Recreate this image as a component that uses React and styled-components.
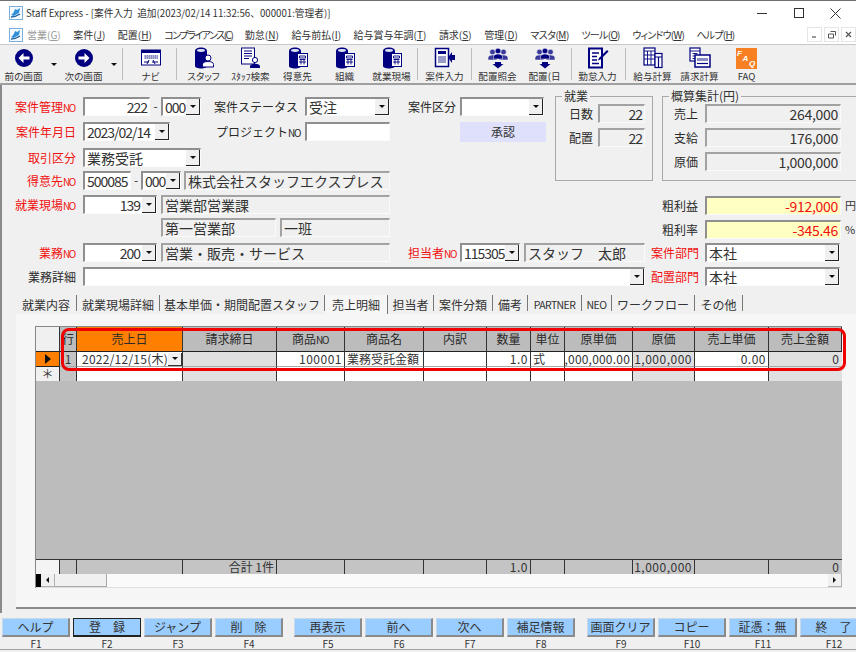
import React from "react";
import styled, { createGlobalStyle } from "styled-components";

const Global = createGlobalStyle`
  html, body { margin: 0; padding: 0; background: #f0f0f0; }
  body { font-family: "Noto Sans CJK JP", "Liberation Sans", sans-serif; color: #222; }
`;
const Root = styled.div`
  width: 856px; height: 652px; overflow: hidden; position: relative;
  display: flex; flex-direction: column; background: #f0f0f0;
  border-top: 1px solid #707070; box-sizing: border-box;
`;
const TitleBar = styled.div`
  height: 24px; flex: none; background: #fff; display: flex; align-items: center;
  padding: 0 2px 0 9px; font-size: 9.7px; color: #333; white-space: nowrap;
`;
const TitleText = styled.span` margin-left: 3px; flex: 1; `;
const WinBtn = styled.div`
  width: 37px; height: 24px; display: flex; align-items: center; justify-content: center; flex: none;
`;
const MenuBar = styled.div`
  height: 19px; flex: none; background: #fff; display: flex; align-items: center;
  padding-left: 9px; font-size: 10px; color: #333; white-space: nowrap; position: relative;
`;
const MenuList = styled.div` display: flex; gap: 12.5px; margin-left: 4px; flex: 1; `;
const MenuItem = styled.span`
  color: ${p => (p.$off ? "#999" : "#333")}; font-feature-settings: "palt";
  letter-spacing: ${p => p.$ls || 0}px;
  u { text-underline-offset: 1px; }
`;
const MdiBtns = styled.div` display: flex; gap: 2px; flex: none; `;
const MdiBtn = styled.div`
  width: 15px; height: 15px; border: 1px solid #e6e6e6; box-sizing: border-box; background: #fff;
  display: flex; align-items: center; justify-content: center;
`;
const Toolbar = styled.div`
  height: 41px; flex: none; display: flex; align-items: stretch; background: #f0f0f0;
  border-bottom: 2px solid #a0a0a0; box-sizing: border-box; border-top: 1px solid #c8c8c8;
`;
const Tool = styled.div`
  width: 47px; flex: none; display: flex; flex-direction: column; align-items: center;
  padding-top: 2px; box-sizing: border-box;
`;
const ToolIcon = styled.div` height: 22px; display: flex; align-items: center; justify-content: center; `;
const ToolLabel = styled.div` font-size: 9.6px; line-height: 14px; color: #333; white-space: nowrap; font-feature-settings: "palt"; `;
const ToolDrop = styled.div`
  width: 13px; flex: none; padding-top: 18px; box-sizing: border-box; display: flex; justify-content: center;
  &::after { content: ""; border-left: 3px solid transparent; border-right: 3px solid transparent; border-top: 3px solid #111; height: 0; }
`;
const ToolSep = styled.div`
  width: 1px; flex: none; background: #bdbdbd; margin: 3px ${p => p.$r ?? 3}px 3px ${p => p.$l ?? 3}px;
`;
const Main = styled.div` flex: 1; display: flex; flex-direction: column; min-height: 0; `;
const Form = styled.div`
  padding: 12px 0 4px; position: relative;
  &::before { content: ""; position: absolute; left: 0; top: 0; bottom: 0; width: 2px; background: #8a8a8a; }
`;
const Top = styled.div` display: flex; `;
const LeftCol = styled.div` width: 555px; flex: none; `;
const RightCol = styled.div` flex: 1; margin-top: -1px; `;
const FormRow = styled.div` display: flex; align-items: flex-start; height: ${p => p.$h}px; `;
const Label = styled.div`
  width: ${p => p.$w || 76}px; margin-left: ${p => p.$ml || 0}px; flex: none; text-align: right; font-size: 12px;
  line-height: 19px; white-space: nowrap; color: ${p => (p.$red ? "#f01010" : "#2a2a2a")};
`;
const No = styled.span` font-size: 10px; letter-spacing: -1.3px; margin-right: 1px; `;
const Dash = styled.div` width: ${p => p.$w}px; flex: none; text-align: center; font-size: 12px; line-height: 18px; color: #333; `;
const Field = styled.div`
  width: ${p => p.$w}px; height: 19px; margin-left: ${p => p.$ml || 0}px; flex: none; box-sizing: border-box;
  display: flex; align-items: stretch;
  background: ${p => p.$bg || (p.$ro ? "#f0f0f0" : "#fff")};
  border-top: 2px solid ${p => (p.$ro ? "#a2a2a2" : "#8f8f8f")};
  border-left: 2px solid ${p => (p.$ro ? "#a2a2a2" : "#8f8f8f")};
  border-right: 1px solid #fbfbfb; border-bottom: 1px solid #fbfbfb;
`;
const Value = styled.div`
  flex: 1; min-width: 0; white-space: nowrap; padding: 0 2px; line-height: 16px;
  font-size: 14px; color: ${p => p.$color || "#333"};
  text-align: ${p => (p.$num ? "right" : "left")};
  letter-spacing: ${p => (p.$ls !== undefined ? p.$ls : p.$digits ? -1 : 0)}px;
`;
const ArrowBtn = styled.div`
  width: 14px; flex: none; background: #f0f0f0; box-sizing: border-box;
  border-right: 1px solid #222; border-bottom: 1px solid #222;
  display: flex; align-items: center; justify-content: center;
  &::after { content: ""; border-left: 3px solid transparent; border-right: 3px solid transparent; border-top: 3px solid #111; height: 0; }
`;
const Approve = styled.div`
  width: 86px; height: 20px; margin-left: ${p => p.$ml}px; flex: none; background: #dfe0fb; text-align: center;
  font-size: 12px; line-height: 19px; color: #333;
`;
const Groups = styled.div` display: flex; gap: 9px; `;
const GroupBox = styled.div`
  width: ${p => p.$w}px; height: 85px; flex: none; box-sizing: border-box; position: relative;
  border: 1px solid #a8a8a8; padding-top: 7px; display: flex; flex-direction: column; gap: 5px;
`;
const Legend = styled.div`
  position: absolute; top: -8px; left: 6px; background: #f0f0f0; padding: 0 2px; font-size: 12px; line-height: 14px; color: #333;
`;
const StatRow = styled.div` display: flex; align-items: flex-start; height: 19px; `;
const Profit = styled.div` display: flex; flex-direction: column; gap: 5px; margin-top: 15px; `;
const Unit = styled.div` font-size: 11px; line-height: 19px; margin-left: 4px; color: #333; white-space: nowrap; `;

const Tabs = styled.div` display: flex; height: 19px; margin: 4px 0 0 16px; align-items: stretch; `;
const TabItem = styled.div`
  width: ${p => p.$w}px; flex: none; box-sizing: border-box; text-align: center; font-size: ${p => (p.$latin ? 10.5 : 12)}px; line-height: 20px; white-space: nowrap;
  color: #333; background: ${p => (p.$active ? "#f6f6f6" : "transparent")};
  border-right: 1px solid #777; margin-bottom: ${p => (p.$active ? 0 : 3)}px;
  letter-spacing: ${p => (p.$latin ? -0.6 : 0)}px;
`;
const Panel = styled.div`
  height: 295px; flex: none; margin-left: 16px; background: #f6f6f6; box-sizing: border-box;
  border-bottom: 2px solid #8a8a8a; padding: 12px 14px 20px 19px;
`;
const GridWrap = styled.div`
  width: 807px; height: 262px; box-sizing: border-box; border-top: 1px solid #888; border-left: 1px solid #888;
  display: flex; flex-direction: column; position: relative; background: #bcbcbc;
`;
const Cols = styled.div`
  display: grid; flex: none; height: ${p => p.$h}px;
  grid-template-columns: 24px 17px 106px 94px 68px 79px 63px 44px 34px 68px 62px 74px 73px;
`;
const Head = styled.div`
  background: ${p => p.$bg || "#bcbcbc"}; border-right: 1px solid #333; border-bottom: 1px solid #222; box-sizing: border-box;
  font-size: 12px; line-height: 23px; text-align: center; color: #2a2a2a; white-space: nowrap;
`;
const Cell = styled.div`
  background: ${p => p.$bg || "#fff"}; border-right: 1px solid ${p => p.$line || "#333"}; border-bottom: 1px solid ${p => p.$under || "#a8a8a8"};
  box-sizing: border-box; font-size: 12px; line-height: 14px; color: #333; white-space: nowrap; min-width: 0;
  display: flex; justify-content: ${p => (p.$right ? "flex-end" : p.$center ? "center" : "flex-start")};
  align-items: center; padding: 0 ${p => (p.$center ? 0 : 2)}px;
  overflow: ${p => (p.$clip ? "hidden" : "visible")};
  letter-spacing: ${p => (p.$clip ? 0.2 : p.$digits ? 0.5 : 0)}px;
`;
const DateText = styled.span` margin-left: 3px; letter-spacing: 0.25px; `;
const SmallArrow = styled.div`
  width: 14px; height: 13px; margin-left: auto; flex: none; background: #f0f0f0; border-right: 1px solid #333; border-bottom: 1px solid #333;
  display: flex; align-items: center; justify-content: center; box-sizing: border-box;
  &::after { content: ""; border-left: 3px solid transparent; border-right: 3px solid transparent; border-top: 3px solid #111; height: 0; }
`;
const EmptyArea = styled.div` flex: 1; background: #bcbcbc; `;
const FooterTop = styled.div` height: 1px; flex: none; background: #333; `;
const ScrollBar = styled.div`
  height: 14px; flex: none; display: flex; background: #fafafa; border-bottom: 1px solid #dedede; box-sizing: border-box;
`;
const ScrollEdge = styled.div` width: 5px; background: #000; flex: none; `;
const ScrollArrow = styled.div`
  width: 14px; flex: none; background: #f0f0f0; box-sizing: border-box; border-right: 1px solid #b0b0b0; border-bottom: 1px solid #b0b0b0;
  margin-left: ${p => (p.$end ? "auto" : 0)};
  display: flex; align-items: center; justify-content: center;
  &::after {
    content: ""; border-top: 3px solid transparent; border-bottom: 3px solid transparent;
    ${p => (p.$end ? "border-left: 3px solid #111;" : "border-right: 3px solid #111;")}
  }
`;
const ScrollThumb = styled.div` width: 52px; flex: none; background: #f0f0f0; border-right: 1px solid #a8a8a8; border-bottom: 1px solid #a8a8a8; box-sizing: border-box; `;
const Highlight = styled.div`
  position: absolute; left: 25px; top: 1px; width: 785px; height: 43px; box-sizing: border-box;
  border: 3px solid #f00000; border-radius: 8px; pointer-events: none;
`;
const FnBar = styled.div`
  display: flex; flex: none; padding: 5px 0 0 2px; gap: 3px; height: 37px; box-sizing: border-box;
  border-bottom: 1px solid #a0a0a0;
`;
const FnCol = styled.div` width: 68px; flex: none; margin-left: ${p => p.$ml || 0}px; display: flex; flex-direction: column; align-items: stretch; `;
const FnButton = styled.div`
  height: 19px; box-sizing: border-box; background: #99ccff; text-align: center; font-size: 12px; line-height: 16px; color: #333; white-space: pre;
  border: 1px solid ${p => (p.$focus ? "#222" : "#c8d8e8")};
  border-right: ${p => (p.$focus ? "1px solid #222" : "2px solid #8a8a8a")};
  border-bottom: ${p => (p.$focus ? "2px solid #222" : "2px solid #8a8a8a")};
`;
const FnKey = styled.div` font-size: 10px; line-height: 12px; margin-top: 1px; text-align: center; color: #333; `;

const N = "#000080";
const Svg = ({ w = 24, h = 24, children }) => <svg width={w} height={h} viewBox={`0 0 ${w} ${h}`}>{children}</svg>;

const AppIcon = () => (
  <svg width="14" height="14" viewBox="0 0 14 14" style={{ flex: "none" }}>
    <rect x="0.5" y="0.5" width="13" height="13" fill="#f4f9fe" stroke="#7fb0dc" />
    <path d="M2 9c2-1 3-3 4-6l2 1 3-2-1 5c-2 1-4 2-5 3z" fill="#2f8fd8" />
    <path d="M2 11c3 0 6-1 9-3" stroke="#1f5f9f" strokeWidth="1.3" fill="none" />
  </svg>
);
const NavArrow = ({ right }) => (
  <Svg w={20} h={20}>
    <circle cx="10" cy="10" r="9" fill={N} />
    <path
      d={right ? "M4.5 8.5h6V5l5 5-5 5v-3.500h-6z" : "M15.500 8.500h-6V5l-5 5 5 5v-3.500h6z"}
      fill="#fff"
    />
  </Svg>
);
const NaviIcon = () => (
  <Svg w={20} h={18}>
    <rect x="0.500" y="1" width="19" height="15" fill="#fff" stroke={N} />
    <rect x="0.500" y="1" width="19" height="3" fill={N} />
    <rect x="3" y="6" width="14" height="4" fill="#8c8cc4" />
    <path d="M3 7h14M3 9h14" stroke="#fff" strokeDasharray="1 1" strokeWidth=".8" />
    <path d="M3 13h5M11 13h6M8 11l-2 4M12 11l2 4" stroke={N} />
  </Svg>
);
const Cylinder = ({ children }) => (
  <Svg w={20} h={22}>
    <path d="M1 4c0-2.200 2.700-3.500 6-3.500s6 1.300 6 3.500v15c0 1.500-2.700 2.500-6 2.500s-6-1-6-2.500z" fill={N} />
    <ellipse cx="7" cy="3.500" rx="4" ry="1.400" fill="#dfe3f5" />
    {children}
  </Svg>
);
const Person = () => (
  <g>
    <circle cx="14" cy="11" r="3" fill="#fff" stroke={N} />
    <path d="M8.500 20v-2.500c0-2 2-3 5.500-3s5.500 1 5.500 3V20z" fill="#fff" stroke={N} />
  </g>
);
const Build = () => (
  <g>
    <rect x="9.500" y="6.500" width="10" height="13" fill="#fff" stroke={N} />
    <path d="M11.500 9h6v2h-6zM11.500 12.500h6M13 12.500v5M16 12.500v5M11 15h7" stroke={N} fill="none" strokeWidth=".9" />
  </g>
);
const DocSearch = () => (
  <Svg w={22} h={22}>
    <rect x="1.500" y="1" width="13" height="16" fill="#fff" stroke={N} />
    <path d="M4 4h8M4 6.500h8M4 9h8M4 11.500h5" stroke={N} />
    <circle cx="15" cy="13" r="2.600" fill="#fff" stroke={N} />
    <path d="M10 21v-1.500c0-1.800 2-2.800 5-2.800s5 1 5 2.800V21z" fill={N} />
  </Svg>
);
const CaseIcon = () => (
  <Svg w={22} h={22}>
    <rect x="1.500" y="1.500" width="13" height="18" fill="#fff" stroke={N} strokeWidth="1.500" />
    <rect x="4" y="4" width="8" height="3" fill={N} />
    <rect x="4" y="9" width="8" height="7" fill="#9a9ac8" />
    <path d="M21 8v5h-3v3l-4-5.500L18 5v3z" fill={N} />
  </Svg>
);
const Figure = ({ x, y, f = N }) => (
  <g>
    <circle cx={x} cy={y} r="2.800" fill={f} stroke="#fff" strokeWidth=".5" />
    <path d={`M${x - 4.500} ${y + 8}v-2c0-2 2-3 4.500-3s4.500 1 4.500 3v2z`} fill={f} stroke="#fff" strokeWidth=".5" />
  </g>
);
const PeopleIcon = () => (
  <Svg w={20} h={22}>
    <Figure x={4.500} y={5} f="#3a3a9a" />
    <Figure x={15.500} y={5} f="#3a3a9a" />
    <Figure x={10} y={4} />
    <path d="M7 15h6v2h2.500L10 21.500 4.500 17H7z" fill={N} />
  </Svg>
);
const TimeIcon = () => (
  <Svg w={22} h={22}>
    <path d="M2 1.500h13v19H2z" fill="#fff" stroke={N} strokeWidth="2" />
    <path d="M5 6h7M5 9.500h5M5 13h5M5 16.500h7" stroke={N} strokeWidth="1.300" />
    <path d="M20 3l1.500 1.500-8 8-2.500 1 1-2.500z" fill={N} />
  </Svg>
);
const CalcIcon = () => (
  <Svg w={20} h={22}>
    <rect x="1" y="1" width="11" height="17" fill="#fff" stroke={N} strokeWidth="1.200" />
    <path d="M1 4h11M1 8h11M1 12h11M4.500 4v14M8 4v14" stroke={N} strokeWidth=".9" />
    <rect x="12" y="6.500" width="7" height="14" fill="#fff" stroke={N} strokeWidth="1.200" />
    <path d="M12 10h7M15.500 10v10" stroke={N} strokeWidth="1.200" />
  </Svg>
);
const BillIcon = () => (
  <Svg w={22} h={22}>
    <rect x="1" y="1" width="10" height="13" fill="#fff" stroke={N} strokeWidth="1.200" />
    <path d="M1 4h10M3.500 6.500h5M3.500 9h5M3.500 11.500h5" stroke={N} strokeWidth=".9" />
    <rect x="6" y="8" width="15" height="12" fill="#fff" stroke={N} strokeWidth="1.500" />
    <rect x="8" y="11" width="11" height="3" fill="#8c8cc4" />
    <path d="M8 16.500h11" stroke={N} strokeWidth="1.200" />
  </Svg>
);
const FaqIcon = () => (
  <Svg w={21} h={21}>
    <rect width="21" height="21" fill="#f78023" />
    <text x="1" y="8" fontFamily="Liberation Sans" fontSize="8" fontWeight="700" fontStyle="italic" fill="#fff">F</text>
    <text x="6.500" y="12.500" fontFamily="Liberation Sans" fontSize="8" fontWeight="700" fontStyle="italic" fill="#fff">A</text>
    <text x="13" y="18" fontFamily="Liberation Sans" fontSize="8" fontWeight="700" fontStyle="italic" fill="#fff">Q</text>
  </Svg>
);

const Combo = ({ w, ml, children, ...rest }) => (
  <Field $w={w} $ml={ml}>
    <Value {...rest}>{children}</Value>
    <ArrowBtn />
  </Field>
);
const Text = ({ w, ml, bg, ro, children, ...rest }) => (
  <Field $w={w} $ml={ml} $bg={bg} $ro={ro}>
    <Value {...rest}>{children}</Value>
  </Field>
);

const menus = [
  { a: "営業(", u: "G", off: true }, { a: "案件(", u: "J" }, { a: "配置(", u: "H" },
  { a: "コンプライアンス(", u: "C", ls: -1.500 },
  { a: "勤怠(", u: "N" }, { a: "給与前払(", u: "I" }, { a: "給与賞与年調(", u: "T" }, { a: "請求(", u: "S" },
  { a: "管理(", u: "D" }, { a: "マスタ(", u: "M", ls: -0.500 }, { a: "ツール(", u: "O", ls: -0.700 },
  { a: "ウィンドウ(", u: "W", ls: -0.800 }, { a: "ヘルプ(", u: "H", ls: -0.800 },
];
const tabs = [
  ["就業内容", 61], ["就業現場詳細", 83], ["基本単価・期間配置スタッフ", 165], ["売上明細", 63, true],
  ["担当者", 46], ["案件分類", 59], ["備考", 35], ["PARTNER", 54, false, true], ["NEO", 30, false, true], ["ワークフロー", 83], ["その他", 48],
];
const heads = ["", "行", "売上日", "請求締日", "商品NO", "商品名", "内訳", "数量", "単位", "原単価", "原価", "売上単価", "売上金額"];
const fnKeys = [
  ["ヘルプ", "F1"], ["登　録", "F2", 0, true], ["ジャンプ", "F3"], ["削　除", "F4"],
  ["再表示", "F5", 8], ["前へ", "F6"], ["次へ", "F7"], ["補足情報", "F8"],
  ["画面クリア", "F9", 9], ["コピー", "F10"], ["証憑：無", "F11"], ["終　了", "F12"],
];
const LOCK = "#e0e0e0";
const FOOT = "#c4c4c4";

export default function App() {
  return (
    <Root>
      <Global />
      <TitleBar>
        <AppIcon />
        <TitleText>Staff Express - [案件入力&nbsp;&nbsp;追加(2023/02/14 11:32:56、000001:管理者)]</TitleText>
        <WinBtn><svg width="10" height="10"><path d="M0 5.500h10" stroke="#333" /></svg></WinBtn>
        <WinBtn><svg width="10" height="10"><rect x=".5" y=".5" width="9" height="9" fill="none" stroke="#333" /></svg></WinBtn>
        <WinBtn><svg width="11" height="11"><path d="M.5.5l10 10M10.500.5l-10 10" stroke="#333" /></svg></WinBtn>
      </TitleBar>
      <MenuBar>
        <AppIcon />
        <MenuList>
          {menus.map(({ a, u, off, ls }) => (
            <MenuItem key={a} $off={off} $ls={ls}>{a}<u>{u}</u>)</MenuItem>
          ))}
        </MenuList>
        <MdiBtns>
          <MdiBtn><svg width="7" height="7"><path d="M1 6h4" stroke="#555" strokeWidth="1.200" /></svg></MdiBtn>
          <MdiBtn><svg width="8" height="8"><path d="M2.500.5h5v4M.5 3h5v4h-5z" fill="none" stroke="#555" /></svg></MdiBtn>
          <MdiBtn><svg width="7" height="7"><path d="M1 1l5 5M6 1l-5 5" stroke="#555" strokeWidth="1.200" /></svg></MdiBtn>
        </MdiBtns>
      </MenuBar>
      <Toolbar>
        <Tool><ToolIcon><NavArrow /></ToolIcon><ToolLabel>前の画面</ToolLabel></Tool>
        <ToolDrop />
        <Tool><ToolIcon><NavArrow right /></ToolIcon><ToolLabel>次の画面</ToolLabel></Tool>
        <ToolDrop />
        <ToolSep $l={2} $r={4} />
        <Tool><ToolIcon><NaviIcon /></ToolIcon><ToolLabel>ナビ</ToolLabel></Tool>
        <ToolSep $l={2} $r={3} />
        <Tool><ToolIcon><Cylinder><Person /></Cylinder></ToolIcon><ToolLabel>スタッフ</ToolLabel></Tool>
        <Tool><ToolIcon><DocSearch /></ToolIcon><ToolLabel>ｽﾀｯﾌ検索</ToolLabel></Tool>
        <Tool><ToolIcon><Cylinder><Build /></Cylinder></ToolIcon><ToolLabel>得意先</ToolLabel></Tool>
        <Tool><ToolIcon><Cylinder><Build /></Cylinder></ToolIcon><ToolLabel>組織</ToolLabel></Tool>
        <Tool><ToolIcon><Cylinder><Build /></Cylinder></ToolIcon><ToolLabel>就業現場</ToolLabel></Tool>
        <ToolSep $l={2} $r={3} />
        <Tool><ToolIcon><CaseIcon /></ToolIcon><ToolLabel>案件入力</ToolLabel></Tool>
        <ToolSep $l={3} $r={2} />
        <Tool><ToolIcon><PeopleIcon /></ToolIcon><ToolLabel>配置照会</ToolLabel></Tool>
        <Tool><ToolIcon><PeopleIcon /></ToolIcon><ToolLabel>配置(日</ToolLabel></Tool>
        <ToolSep $l={3} $r={2} />
        <Tool><ToolIcon><TimeIcon /></ToolIcon><ToolLabel>勤怠入力</ToolLabel></Tool>
        <ToolSep $l={4} $r={3} />
        <Tool><ToolIcon><CalcIcon /></ToolIcon><ToolLabel>給与計算</ToolLabel></Tool>
        <Tool><ToolIcon><BillIcon /></ToolIcon><ToolLabel>請求計算</ToolLabel></Tool>
        <Tool><ToolIcon><FaqIcon /></ToolIcon><ToolLabel>FAQ</ToolLabel></Tool>
      </Toolbar>
      <Main>
        <Form>
          <Top>
            <LeftCol>
              <FormRow $h={25}>
                <Label $red>案件管理<No>NO</No></Label>
                <Text w={67} ml={7} $num $digits>222</Text>
                <Dash $w={11}>-</Dash>
                <Combo w={40} $digits>000</Combo>
                <Label $w={83} $ml={13}>案件ステータス</Label>
                <Combo w={85} ml={8}>受注</Combo>
                <Label $w={47} $ml={18}>案件区分</Label>
                <Combo w={84} ml={5} />
              </FormRow>
              <FormRow $h={26}>
                <Label $red>案件年月日</Label>
                <Combo w={87} ml={7} $digits>2023/02/14</Combo>
                <Label $w={82} $ml={46}>プロジェクト<No>NO</No></Label>
                <Text w={85} ml={7} />
                <Approve $ml={70}>承認</Approve>
              </FormRow>
              <FormRow $h={23}>
                <Label $red>取引区分</Label>
                <Combo w={118} ml={7}>業務受託</Combo>
              </FormRow>
              <FormRow $h={24}>
                <Label $red>得意先<No>NO</No></Label>
                <Text w={48} ml={7} $digits>500085</Text>
                <Dash $w={10}>-</Dash>
                <Combo w={40} $digits>000</Combo>
                <Text w={206} ml={3} ro>株式会社スタッフエクスプレス</Text>
              </FormRow>
              <FormRow $h={23}>
                <Label $red>就業現場<No>NO</No></Label>
                <Combo w={74} ml={7} $num $digits>139</Combo>
                <Text w={229} ml={4} ro>営業部営業課</Text>
              </FormRow>
              <FormRow $h={25}>
                <Text w={115} ml={161} ro>第一営業部</Text>
                <Text w={110} ml={4} ro>一班</Text>
              </FormRow>
            </LeftCol>
            <RightCol>
              <Groups>
                <GroupBox $w={98}>
                  <Legend>就業</Legend>
                  <StatRow><Label $w={37}>日数</Label><Text w={47} ml={5} ro $num $digits>22</Text></StatRow>
                  <StatRow><Label $w={37}>配置</Label><Text w={47} ml={5} ro $num $digits>22</Text></StatRow>
                </GroupBox>
                <GroupBox $w={200}>
                  <Legend>概算集計(円)</Legend>
                  <StatRow><Label $w={35}>売上</Label><Text w={136} ml={7} ro $num $ls={-0.300}>264,000</Text></StatRow>
                  <StatRow><Label $w={35}>支給</Label><Text w={136} ml={7} ro $num $ls={-0.300}>176,000</Text></StatRow>
                  <StatRow><Label $w={35}>原価</Label><Text w={136} ml={7} ro $num $ls={-0.300}>1,000,000</Text></StatRow>
                </GroupBox>
              </Groups>
              <Profit>
                <StatRow>
                  <Label $w={143}>粗利益</Label>
                  <Text w={136} ml={7} bg="#ffffc4" $num $ls={-0.300} $color="#f01010">-912,000</Text>
                  <Unit>円</Unit>
                </StatRow>
                <StatRow>
                  <Label $w={143}>粗利率</Label>
                  <Text w={136} ml={7} bg="#ffffc4" $num $ls={-0.300} $color="#f01010">-345.46</Text>
                  <Unit>%</Unit>
                </StatRow>
              </Profit>
            </RightCol>
          </Top>
          <FormRow $h={24}>
            <Label $red>業務<No>NO</No></Label>
            <Combo w={74} ml={7} $num $digits>200</Combo>
            <Text w={229} ml={4} ro>営業・販売・サービス</Text>
            <Label $w={49} $ml={18} $red>担当者<No>NO</No></Label>
            <Combo w={60} ml={3} $digits>115305</Combo>
            <Text w={121} ml={4} ro>スタッフ　太郎</Text>
            <Label $w={47} $ml={6} $red>案件部門</Label>
            <Combo w={135} ml={7}>本社</Combo>
          </FormRow>
          <FormRow $h={24}>
            <Label>業務詳細</Label>
            <Combo w={562} ml={7} />
            <Label $w={47} $ml={6} $red>配置部門</Label>
            <Combo w={135} ml={7}>本社</Combo>
          </FormRow>
          <Tabs>
            {tabs.map(([t, w, a, latin]) => <TabItem key={t} $w={w} $active={a} $latin={latin}>{t}</TabItem>)}
          </Tabs>
          <Panel>
            <GridWrap>
              <Cols $h={25}>
                {heads.map((h, i) => (
                  <Head key={i} $bg={i === 0 ? "#f0f0f0" : i === 2 ? "#ff8000" : undefined}>
                    {h === "商品NO" ? <>商品<No>NO</No></> : h}
                  </Head>
                ))}
              </Cols>
              <Cols $h={15}>
                <Cell $bg="#ff8000" $center $under="#222">
                  <svg width="8" height="10"><path d="M1 0l6 5-6 5z" fill="#111" /></svg>
                </Cell>
                <Cell $bg="#c4c4c4" $center>1</Cell>
                <Cell><DateText>2022/12/15(木)</DateText><SmallArrow /></Cell>
                <Cell $bg={LOCK} />
                <Cell $right $digits>100001</Cell>
                <Cell>業務受託金額</Cell>
                <Cell />
                <Cell $right $digits>1.0</Cell>
                <Cell>式</Cell>
                <Cell $right $digits $clip>1,000,000.00</Cell>
                <Cell $bg={LOCK} $right $digits>1,000,000</Cell>
                <Cell $right $digits>0.00</Cell>
                <Cell $bg={LOCK} $right $line="transparent">0</Cell>
              </Cols>
              <Cols $h={14}>
                <Cell $bg="#f0f0f0" $center $under="#222">＊</Cell>
                <Cell $bg="#c4c4c4" $under="#888" />
                <Cell $under="#888" />
                <Cell $bg={LOCK} $under="#888" />
                <Cell $under="#888" />
                <Cell $under="#888" />
                <Cell $under="#888" />
                <Cell $under="#888" />
                <Cell $under="#888" />
                <Cell $under="#888" />
                <Cell $bg={LOCK} $under="#888" />
                <Cell $under="#888" />
                <Cell $bg={LOCK} $under="#888" $line="transparent" />
              </Cols>
              <EmptyArea />
              <FooterTop />
              <Cols $h={14}>
                <Cell $bg="#f4f4f4" $under="transparent" />
                <Cell $bg={FOOT} $under="transparent" />
                <Cell $bg={FOOT} $under="transparent" />
                <Cell $bg={FOOT} $under="transparent" $right>合計 1件</Cell>
                <Cell $bg={FOOT} $under="transparent" />
                <Cell $bg={FOOT} $under="transparent" />
                <Cell $bg={FOOT} $under="transparent" />
                <Cell $bg={FOOT} $under="transparent" $right $digits>1.0</Cell>
                <Cell $bg={FOOT} $under="transparent" />
                <Cell $bg={FOOT} $under="transparent" />
                <Cell $bg={FOOT} $under="transparent" $right $digits>1,000,000</Cell>
                <Cell $bg={FOOT} $under="transparent" />
                <Cell $bg={FOOT} $under="transparent" $right $line="transparent">0</Cell>
              </Cols>
              <ScrollBar>
                <ScrollEdge />
                <ScrollArrow />
                <ScrollThumb />
                <ScrollArrow $end />
              </ScrollBar>
              <Highlight />
            </GridWrap>
          </Panel>
        </Form>
        <FnBar>
          {fnKeys.map(([t, k, ml, focus]) => (
            <FnCol key={k} $ml={ml}>
              <FnButton $focus={focus}>{t}</FnButton>
              <FnKey>{k}</FnKey>
            </FnCol>
          ))}
        </FnBar>
      </Main>
    </Root>
  );
}
